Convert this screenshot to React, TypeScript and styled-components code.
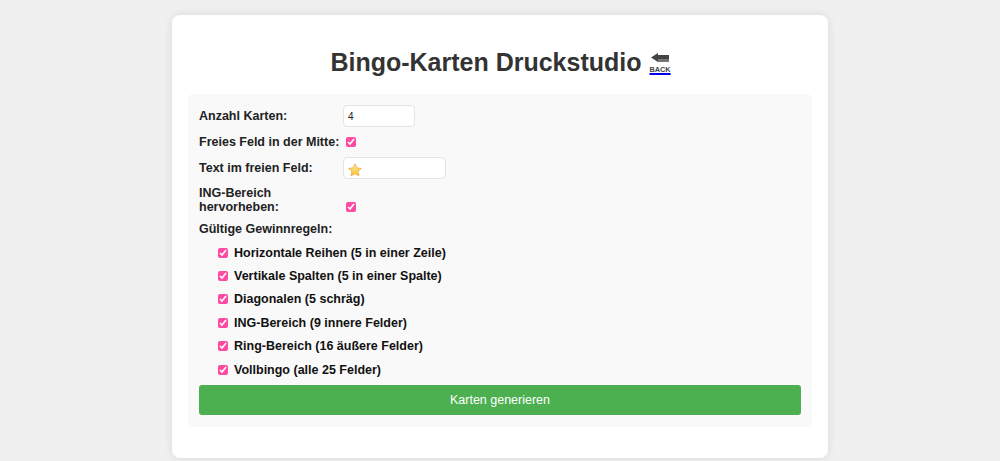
import styled, { createGlobalStyle } from 'styled-components'

const rules = [
  'Horizontale Reihen (5 in einer Zeile)',
  'Vertikale Spalten (5 in einer Spalte)',
  'Diagonalen (5 schräg)',
  'ING-Bereich (9 innere Felder)',
  'Ring-Bereich (16 äußere Felder)',
  'Vollbingo (alle 25 Felder)',
]

export default function App() {
  return (
    <>
      <GlobalStyle />
      <Card>
        <Title>
          Bingo-Karten Druckstudio
          <BackLink href="#">
            <svg width="20" height="11" viewBox="0 0 20 11">
              <path d="M1 4.5 L8 0 V2 H19 V6 H8 V9 Z" fill="#444" />
              <rect x="8" y="6" width="11" height="3" fill="#777" />
            </svg>
            <span>BACK</span>
          </BackLink>
        </Title>
        <Panel>
          <Row>
            <Label>Anzahl Karten:</Label>
            <TextInput type="number" defaultValue={4} $width={72} />
          </Row>
          <Row>
            <Label>Freies Feld in der Mitte:</Label>
            <Check defaultChecked />
          </Row>
          <Row>
            <Label>Text im freien Feld:</Label>
            <StarField>
              <TextInput type="text" $width={103} />
              <Star width="14" height="14" viewBox="0 0 24 24">
                <defs>
                  <linearGradient id="starFill" x1="0" y1="0" x2="0" y2="1">
                    <stop offset="0" stopColor="#fff0a0" />
                    <stop offset="1" stopColor="#fbc02d" />
                  </linearGradient>
                </defs>
                <path
                  d="M12 1.5 L15.2 8.4 L22.8 9.3 L17.2 14.4 L18.7 22 L12 18.2 L5.3 22 L6.8 14.4 L1.2 9.3 L8.8 8.4 Z"
                  fill="url(#starFill)"
                  stroke="#f0a63a"
                  strokeWidth="1.4"
                  strokeLinejoin="round"
                />
              </Star>
            </StarField>
          </Row>
          <Row $end>
            <Label $tight>ING-Bereich hervorheben:</Label>
            <Check defaultChecked $lift />
          </Row>
          <Row>
            <Label $wide>Gültige Gewinnregeln:</Label>
          </Row>
          <RuleList>
            {rules.map((rule) => (
              <RuleRow key={rule}>
                <Check defaultChecked />
                <RuleText>{rule}</RuleText>
              </RuleRow>
            ))}
          </RuleList>
          <Submit type="button">Karten generieren</Submit>
        </Panel>
      </Card>
    </>
  )
}

const GlobalStyle = createGlobalStyle`
  html, body {
    margin: 0;
    height: 461px;
    overflow: hidden;
    background: #f0f0f0;
    font-family: "Liberation Sans", Arial, sans-serif;
  }
`

const Card = styled.div`
  box-sizing: border-box;
  width: 656px;
  height: 443px;
  margin: 15px auto 0;
  padding: 0 16px;
  background: #fff;
  border-radius: 8px;
  box-shadow: 0 0 10px rgba(0, 0, 0, 0.1);
`

const Title = styled.h1`
  display: flex;
  justify-content: center;
  align-items: center;
  gap: 8px;
  height: 79px;
  margin: 0;
  padding: 15px 0 0 1px;
  box-sizing: border-box;
  font-size: 25px;
  font-weight: 700;
  color: #333;
`

const BackLink = styled.a`
  display: flex;
  flex-direction: column;
  align-items: center;
  margin-top: 3px;
  text-decoration: none;

  span {
    margin-top: 1px;
    font-size: 7.3px;
    line-height: 9px;
    font-weight: 700;
    color: #444;
    text-decoration: underline;
    text-decoration-color: #0000ee;
    text-decoration-thickness: 1.5px;
  }
`

const Panel = styled.div`
  display: flex;
  flex-direction: column;
  gap: 8px;
  padding: 11px 11px 12px;
  background: #f9f9f9;
  border-radius: 5px;
`

const Row = styled.div<{ $end?: boolean }>`
  display: flex;
  align-items: ${(p) => (p.$end ? 'flex-end' : 'center')};
`

const Label = styled.label<{ $wide?: boolean; $tight?: boolean }>`
  width: ${(p) => (p.$wide ? 'auto' : '141px')};
  margin-right: 3px;
  font-size: 12.5px;
  line-height: ${(p) => (p.$tight ? '13.5px' : '14px')};
  font-weight: 700;
  color: #222;
`

const TextInput = styled.input<{ $width: number }>`
  box-sizing: border-box;
  display: block;
  width: ${(p) => p.$width}px;
  height: 22px;
  padding: 0 4px;
  border: 1px solid #e4e4e4;
  border-radius: 4px;
  background: #fff;
  font-family: inherit;
  font-size: 10px;
  color: #222;
  appearance: textfield;
`

const StarField = styled.div`
  position: relative;
`

const Star = styled.svg`
  position: absolute;
  left: 5px;
  top: 6px;
`

const Check = styled.input.attrs({ type: 'checkbox' })<{ $lift?: boolean }>`
  flex: none;
  width: 10px;
  height: 10px;
  margin: 0 0 ${(p) => (p.$lift ? '2px' : '0')} 3px;
  accent-color: #ff4aa2;
`

const RuleList = styled.div`
  display: flex;
  flex-direction: column;
  gap: 8px;
  margin-top: 1px;
`

const RuleRow = styled.div`
  display: flex;
  align-items: center;
  height: 15.4px;
  padding-left: 16px;
`

const RuleText = styled.span`
  margin-left: 6px;
  font-size: 12.5px;
  font-weight: 700;
  color: #111;
`

const Submit = styled.button`
  height: 30px;
  border: 0;
  border-radius: 3px;
  background: #4caf50;
  color: #fff;
  font-family: inherit;
  font-size: 12.5px;
`
